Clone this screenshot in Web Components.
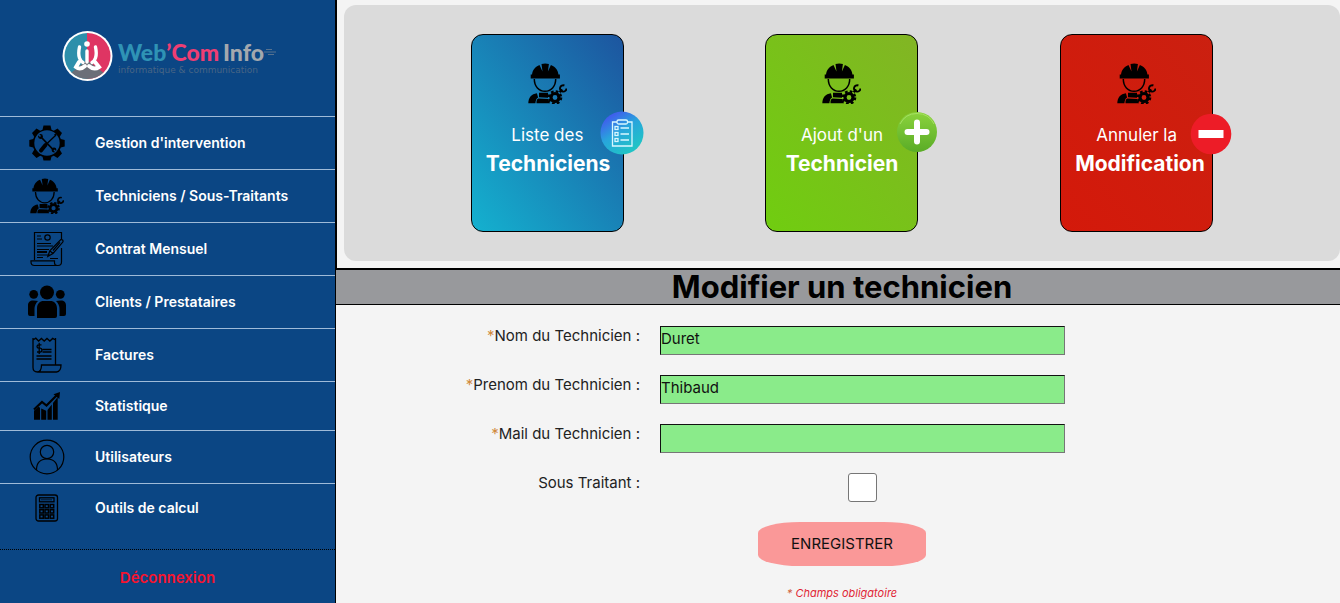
<!DOCTYPE html>
<html lang="fr">
<head>
<meta charset="utf-8">
<meta name="viewport" content="width=device-width, initial-scale=1">
<title>Modifier un technicien</title>
<style>
  body { margin: 0; background: #f4f4f4; color: #111; font-family: Inter, "Liberation Sans", sans-serif; }
</style>
</head>
<body>
<technician-app></technician-app>
<script>
const ICONS = {
  gear: `<svg width="36" height="36" viewBox="0 0 36 36"><path fill-rule="evenodd" d="M14.500 0.500h7l1 4.200 2.300 1 3.700-2.200 4.500 4.500-2.200 3.700 1 2.300 3.900 1v6.500l-3.900 1-1 2.300 2.200 3.700-4.500 4.500-3.700-2.200-2.300 1-1 3.700h-7l-1-3.700-2.300-1-3.700 2.200L3 28.500l2.200-3.700-1-2.300-3.900-1V15l3.900-1 1-2.300L3 8l4.500-4.500 3.700 2.200 2.300-1zM18 5.300a12.700 12.700 0 1 0 0 25.400a12.700 12.700 0 0 0 0-25.400z"/><path d="M12.500 12.500L24 24.500" stroke="#000" stroke-width="1.800"/><circle cx="11.500" cy="11.500" r="2.400"/><circle cx="25" cy="25" r="2.400"/><path d="M9 9l2.500 2.500" stroke="#0b4684" stroke-width="1.600"/><path d="M25 25l2 2" stroke="#0b4684" stroke-width="1.400"/><path d="M27 10L17 19.500" stroke="#000" stroke-width="1.300"/><path d="M16.500 20L12 25.500" stroke="#000" stroke-width="4" stroke-linecap="round"/><path d="M28 8l-3 1.500 1.800 1.800z"/></svg>`,
  tech: `<svg width="39" height="41" viewBox="0 0 39 41"><path d="M4 12C4.300 7 7.500 3.500 11.500 2l3 6.500L13.500 1q3.700-1.200 7.400 0l-1 7.500 3-6.500C27 3.500 30.200 7 30.500 12zM2.700 11.500h29.200v3.900H2.700z"/><path d="M6.300 16C6.300 23.500 11 28.300 17 28.300S27.700 23.500 27.700 16" fill="none" stroke="#000" stroke-width="1.500"/><path d="M.3 40.300C.5 34.500 3.500 31 8.900 30.300l1.200 4.200q-2.400 1.300-2.700 5.800zM11 29.800h9v4.900l-9-.4zM8.500 40.300q-.3-4 2-4.700l9.500.4 2 4.300z"/><g fill="none" stroke="#000"><circle cx="27" cy="34.500" r="4" stroke-width="3.200"/><circle cx="27" cy="34.500" r="6.200" stroke-width="2.200" stroke-dasharray="2.700 2.170"/><path d="M31.700 29.300l2.600-2.800" stroke-width="2.400"/><path d="M36.400 22.500a3.200 3.200 0 1 0 2 3" stroke-width="1.900"/></g></svg>`,
  contract: `<svg width="34" height="36" viewBox="0 0 34 36" fill="none" stroke="#000" stroke-width="1.200"><path d="M4.500 29V1.500h27V8M31.500 17v14q0 3.500-3.500 3.500H4.500Q1 34.500 1 31v-1.200h23.500V32q0 2.500 3 2.500M7 5h4M7 8h5M7 12.500h14M7 15h16M7 18.500h12M7 24h13M7 26.500h6M20 27.500h8"/><path d="M7 21h10" stroke-width="2"/><circle cx="17.500" cy="6.500" r="2.700"/><path d="M30.800 8.500q2.500-.2 2.200 2.300L23 22.500l-5.200 3 2-5.700zM20 20l3 2.500M23 19.500l7-8.200"/></svg>`,
  people: `<svg width="38" height="34" viewBox="0 0 38 34"><circle cx="19" cy="7.500" r="7"/><circle cx="5.700" cy="9.300" r="4.400"/><circle cx="32.300" cy="9.300" r="4.400"/><path d="M9 33V23.500C9 18.500 12 16 15.500 16h7C26 16 29 18.500 29 23.500V31q0 2-2 2zM6.500 31H2Q0 31 0 29v-8.500C0 17 2 15.500 5 15.500q3.500 0 5 .5-3.500 3.500-3.500 8zM31.500 31V24q0-4.500-3.500-8 1.500-.5 5-.5c3 0 5 1.500 5 5V29q0 2-2 2z"/></svg>`,
  invoice: `<svg width="30" height="36" viewBox="0 0 30 36" fill="none" stroke="#000" stroke-width="1.300"><path d="M1 1v29.500q0 4.500 4.500 4.500h19q4.500-.5 4.500-7H9.500q0 7-4.500 7M23.500 28V1M1 3l2.800-1.800L6.600 4l2.800-2.600L12.200 4 15 1.400 17.900 4l2.800-2.600L23.500 3M10.500 12.500h9M10.500 15h9M4.500 19h15M4.500 22h15M9.500 7.800H6.800Q5 7.800 5 9.500t1.800 1.700h1.400q1.700 0 1.700 1.900t-1.700 1.900H5M7.200 5.800v11.200"/></svg>`,
  stats: `<svg width="28" height="30" viewBox="0 0 28 30"><path d="M1 28.800v-9l4.500-4 1.500 1v12zM8.200 28.800V17.500l5 2.300v9zM14.500 28.800V19l4.300-5.500v15.300zM20 28.800V12l4.700-6v22.800z"/><path d="M1 18.500L9 11l4.500 3.500L24 4" fill="none" stroke="#000" stroke-width="2.200"/><path d="M20.500 3.200L27 1l-.7 7z"/></svg>`,
  user: `<svg width="36" height="36" viewBox="0 0 36 36" fill="none" stroke="#000" stroke-width="1.200"><circle cx="18" cy="18" r="16.800"/><circle cx="18" cy="13" r="6.700"/><path d="M7.500 31Q7.500 20 18 20t10.500 11"/></svg>`,
  calc: `<svg width="24" height="28" viewBox="0 0 24 28" fill="none" stroke="#000" stroke-width="1.300"><rect x="1" y="1" width="21.500" height="26" rx="2.500"/><rect x="4.500" y="3.800" width="14.500" height="4"/><path d="M6 5.800h11" stroke-width=".7"/><g stroke-width="1.500"><rect x="4.800" y="10.500" width="3.500" height="3.300"/><rect x="10" y="10.500" width="3.500" height="3.300"/><rect x="15.200" y="10.500" width="3.500" height="3.300"/><rect x="4.800" y="15.700" width="3.500" height="3.300"/><rect x="10" y="15.700" width="3.500" height="3.300"/><rect x="15.200" y="15.700" width="3.500" height="3.300"/><rect x="4.800" y="20.900" width="3.500" height="3.300"/><rect x="10" y="20.900" width="3.500" height="3.300"/><rect x="15.200" y="20.900" width="3.500" height="3.300"/></g></svg>`
};

const BADGES = {
  list: `<svg width="44" height="44" viewBox="0 0 44 44"><defs><linearGradient id="b" x1=".15" y1=".05" x2=".7" y2=".9"><stop offset="0" stop-color="#4450f0"/><stop offset=".5" stop-color="#28a5dc"/><stop offset="1" stop-color="#20c3c6"/></linearGradient></defs><circle cx="22" cy="22" r="21.500" fill="url(#b)"/><g fill="none" stroke="#d9f7ff" stroke-width="1.300"><path d="M17 11h-4.500v24h19.500V11H27.500"/><rect x="17" y="9" width="10.500" height="4" rx="1.500"/><rect x="15" y="15.500" width="3" height="3"/><rect x="15" y="21.500" width="3" height="3"/><rect x="15" y="27.500" width="3" height="3"/><path d="M20.500 17H29M20.500 23H29M20.500 29H29"/></g></svg>`,
  add: `<svg width="42" height="42" viewBox="0 0 42 42"><defs><linearGradient id="g" x1="0" y1="0" x2="0" y2="1"><stop offset="0" stop-color="#8bd33c"/><stop offset="1" stop-color="#5aac27"/></linearGradient></defs><circle cx="21" cy="21" r="20" fill="url(#g)"/><path d="M4 13A19 19 0 0 1 38 13" fill="none" stroke="#a6e063" stroke-width="1"/><path d="M21 11.500v19M11.500 21h19" stroke="#fff" stroke-width="6" stroke-linecap="round"/></svg>`,
  cancel: `<svg width="42" height="42" viewBox="0 0 42 42"><circle cx="21" cy="21" r="20.300" fill="#ed1c27"/><rect x="8.500" y="17" width="25" height="8" fill="#fff"/></svg>`
};

class BaseElement extends HTMLElement {
  constructor() {
    super();
    this.attachShadow({ mode: "open" });
  }
  connectedCallback() {
    this.shadowRoot.innerHTML = this.render();
  }
}

class BrandLogo extends BaseElement {
  render() {
    return `<style>
      :host { display: block; padding: 30px 0 34px 62px; }
      a { display: flex; align-items: center; gap: 5px; height: 52px; text-decoration: none; white-space: nowrap; }
      svg { flex: none; }
      .name { display: flex; align-items: center; padding-top: 4px; font: 900 23px/24px Lato, sans-serif; color: #2f93b5; }
      .com { color: #ef3e73; }
      .info { color: #a3a8ae; margin-left: 4px; }
      .tag { display: block; font: 9px/12px "DejaVu Sans", sans-serif; color: #486584; }
    </style>
    <a href="#">
      <svg width="51" height="52" viewBox="0 0 51 52">
        <defs><clipPath id="c"><circle cx="25.500" cy="26" r="23"/></clipPath></defs>
        <circle cx="25.500" cy="26" r="25" fill="#fff"/>
        <g clip-path="url(#c)"><path fill="#2d8fab" d="M0 0h25v52H0z"/><path fill="#df3563" d="M25 0h26v52H25z"/><path fill="#6b6f78" d="M0 50L25 30l26 20v6H0z"/></g>
        <g fill="none" stroke="#fff" stroke-linecap="round"><path stroke-width="3.400" d="M17.500 17q-1.500 7 0 11 1 3 3.500 4.500M25 21v11M33.500 17q1.500 7 0 11-1 3-3.500 4.500"/><path stroke-width="4" d="M17 32l-3 5q4 3.500 9-1M33 32l4 5q-5 3.500-10-1"/></g>
        <circle cx="25" cy="14" r="2.800" fill="#fff"/>
      </svg>
      <span>
        <span class="name"><span>Web</span><span class="com">’Com</span><span class="info">Info</span><svg width="12" height="8" viewBox="0 0 12 8" fill="none" stroke="#58728f"><path d="M0 4h12M2 1.500h6M4 6.500h6"/></svg></span>
        <span class="tag">informatique &amp; communication</span>
      </span>
    </a>`;
  }
}

class NavItem extends BaseElement {
  render() {
    return `<style>
      :host { display: block; border-top: 1px solid #9fbbd9; }
      a { display: grid; grid-template-columns: 94px 1fr; column-gap: 1px; align-items: center; min-height: 52px; color: #fff; font-size: 14px; font-weight: 600; line-height: 20px; text-decoration: none; white-space: nowrap; }
      :host([compact]) a { min-height: 48px; }
      .icon { display: flex; justify-content: center; }
      svg { display: block; max-height: 36px; }
      :host([icon="tech"]) svg { width: 34px; height: 36px; }
    </style>
    <a href="#"><span class="icon">${ICONS[this.getAttribute("icon")]}</span><slot></slot></a>`;
  }
}

class SideBar extends BaseElement {
  render() {
    return `<style>
      :host { display: block; background: #0b4684; border-right: 1px solid #000; }
      nav { padding-bottom: 17px; border-bottom: 1px dotted #000; }
      .logout { display: block; padding: 18px 0; text-align: center; color: #f5142f; font-size: 15px; line-height: 20px; font-weight: 600; text-decoration: none; }
    </style>
    <brand-logo></brand-logo>
    <nav>
      <nav-item icon="gear">Gestion d'intervention</nav-item>
      <nav-item icon="tech">Techniciens / Sous-Traitants</nav-item>
      <nav-item icon="contract">Contrat Mensuel</nav-item>
      <nav-item icon="people">Clients / Prestataires</nav-item>
      <nav-item icon="invoice">Factures</nav-item>
      <nav-item icon="stats" compact>Statistique</nav-item>
      <nav-item icon="user">Utilisateurs</nav-item>
      <nav-item icon="calc" compact>Outils de calcul</nav-item>
    </nav>
    <a class="logout" href="#">Déconnexion</a>`;
  }
}

class ActionCard extends BaseElement {
  render() {
    return `<style>
      :host { display: block; width: 153px; }
      a { position: relative; box-sizing: border-box; display: flex; flex-direction: column; min-height: 198px; padding: 28px 14px; border: 1px solid #000; border-radius: 12px; color: #fff; text-align: center; text-decoration: none; white-space: nowrap; background: linear-gradient(to top right, #14b1cf, #1d559f); }
      :host([kind="add"]) a { background: linear-gradient(to top right, #70cd10, #82b524); }
      :host([kind="cancel"]) a { background: linear-gradient(to top right, #d4190a, #cb2010); }
      .line { margin-top: 18px; font-size: 17px; line-height: 26px; }
      strong { font-size: 21px; line-height: 32px; }
      svg { display: block; margin: 0 auto; }
      .badge { position: absolute; top: 76px; right: -21px; }
      :host([kind="cancel"]) .badge { top: 78px; right: -20px; }
    </style>
    <a href="#">${ICONS.tech}<span class="line"><slot></slot></span><strong><slot name="subject"></slot></strong><span class="badge">${BADGES[this.getAttribute("kind")]}</span></a>`;
  }
}

class ActionBar extends BaseElement {
  render() {
    return `<style>
      :host { display: block; padding: 5px 0 7px 7px; border-left: 1px solid #000; border-bottom: 1px solid #000; }
      div { display: flex; justify-content: space-around; padding: 29px 56px; border-radius: 12px; background: #dbdbdb; }
    </style>
    <div><slot></slot></div>`;
  }
}

class PageTitle extends BaseElement {
  render() {
    return `<style>
      :host { display: block; padding-left: 8px; border-top: 1px solid #000; border-bottom: 1px solid #000; background: #98999c; }
      h1 { margin: 0; color: #000; font-size: 31px; line-height: 34px; font-weight: 700; text-align: center; }
    </style>
    <h1><slot></slot></h1>`;
  }
}

class FormField extends BaseElement {
  render() {
    const type = this.getAttribute("type") || "text";
    const star = this.hasAttribute("required") ? `<span class="star">*</span>` : "";
    return `<style>
      :host { display: grid; grid-template-columns: 304fr 405fr 255fr; column-gap: 20px; align-items: start; }
      label { text-align: right; font-size: 15px; line-height: 20px; color: #222; }
      .star { color: #d08a3c; }
      input { box-sizing: border-box; height: 29px; margin: 0; }
      input[type="checkbox"] { appearance: none; width: 29px; justify-self: center; border: 1px solid #767676; border-radius: 3px; background: #fff; }
      input[type="checkbox"]:checked { background: #0b4684; }
      input:not([type="checkbox"]) { width: 100%; padding: 0 0 4px; border: 1px solid; border-color: #111 #767676 #767676 #111; border-radius: 0; background: #8aeb8a; color: #111; font: 15px Inter, "Liberation Sans", sans-serif; }
    </style>
    <label for="field">${star}<slot></slot></label>
    <input id="field" type="${type}" value="${this.getAttribute("value") || ""}">`;
  }
}

class TechnicianForm extends BaseElement {
  render() {
    return `<style>
      :host { display: block; padding-top: 21px; }
      form { display: grid; row-gap: 20px; }
      .foot { display: flex; flex-direction: column; align-items: center; gap: 20px; padding-left: 8px; }
      button { padding: 0 32px; height: 44px; min-width: 168px; border: 0; border-radius: 25%; background: #fa9898; color: #111; font: 15px/42px Inter, "Liberation Sans", sans-serif; }
      p { margin: 0; color: #e01f35; font-size: 11px; line-height: 14px; font-style: italic; }
      p span { color: #d0603c; }
    </style>
    <form onsubmit="return false">
      <form-field required value="Duret">Nom du Technicien :</form-field>
      <form-field required value="Thibaud">Prenom du Technicien :</form-field>
      <form-field required type="email">Mail du Technicien :</form-field>
      <form-field type="checkbox">Sous Traitant :</form-field>
      <div class="foot"><button type="submit">ENREGISTRER</button><p><span>*</span> Champs obligatoire</p></div>
    </form>`;
  }
}

class TechnicianApp extends BaseElement {
  render() {
    return `<style>
      :host { display: grid; grid-template-columns: calc(25% + 1px) 1fr; min-height: 100vh; }
      main { min-width: 0; }
    </style>
    <side-bar></side-bar>
    <main>
      <action-bar>
        <action-card kind="list">Liste des<span slot="subject">Techniciens</span></action-card>
        <action-card kind="add">Ajout d'un<span slot="subject">Technicien</span></action-card>
        <action-card kind="cancel">Annuler la<span slot="subject">Modification</span></action-card>
      </action-bar>
      <page-title>Modifier un technicien</page-title>
      <technician-form></technician-form>
    </main>`;
  }
}

customElements.define("brand-logo", BrandLogo);
customElements.define("nav-item", NavItem);
customElements.define("side-bar", SideBar);
customElements.define("action-card", ActionCard);
customElements.define("action-bar", ActionBar);
customElements.define("page-title", PageTitle);
customElements.define("form-field", FormField);
customElements.define("technician-form", TechnicianForm);
customElements.define("technician-app", TechnicianApp);
</script>
</body>
</html>
